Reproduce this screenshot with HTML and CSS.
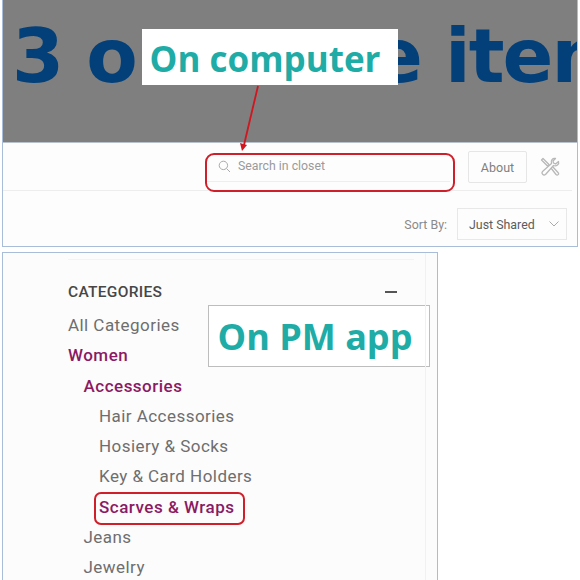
FILE: index.html
```html
<!DOCTYPE html>
<html lang="en">

<head>
    <meta charset="UTF-8">
    <title>Search in closet</title>
    <link rel="stylesheet" href="styles.css">
</head>

<body>

    <div class="shot shot-computer">
        <div class="banner">
            <div class="banner-text">3 on more items</div>
            <div class="callout callout-computer">On computer</div>
            <svg class="arrow" width="30" height="70" viewBox="0 0 30 70">
                <path d="M22 1 L8 60" stroke="#d0161f" stroke-width="1.8" fill="none"/>
                <path d="M4 58 L11 60 L6 66 Z" fill="#d0161f"/>
            </svg>
        </div>

        <div class="toolbar">
            <div class="search-ring">
                <div class="search-field">
                    <svg class="search-icon" width="13" height="13" viewBox="0 0 13 13">
                        <circle cx="5.4" cy="5.4" r="4.2" stroke="#aaa" stroke-width="1" fill="none"/>
                        <path d="M8.5 8.5 L12 12" stroke="#aaa" stroke-width="1" fill="none"/>
                    </svg>
                    <span>Search in closet</span>
                </div>
            </div>
            <button class="about-btn">About</button>
            <svg class="tools-icon" width="20" height="20" viewBox="0 0 20 20">
                <path d="M18.500 4.500 L15.500 7 L13.500 6 L13 4 L15.500 1.500 C12.500 0.800 10.500 3.500 11.500 6.500 L2.500 14.500 C0.800 16.500 3.500 19 5.500 17.500 L13.500 8.500 C16.500 9.500 19.500 7.500 18.500 4.500 Z" stroke="#b8b8b8" stroke-width="1.300" fill="none" stroke-linejoin="round"/>
                <path d="M1.500 3 L3 1.500 L9 7.500 L7.500 9 Z M11 11 L16 17.500 C17.500 19 19.500 17 18 15.500 L12.500 9.500" stroke="#b8b8b8" stroke-width="1.300" fill="none" stroke-linejoin="round"/>
            </svg>
        </div>

        <div class="sort-row">
            <span class="sort-label">Sort By:</span>
            <div class="sort-select">
                <span>Just Shared</span>
                <svg width="10" height="6" viewBox="0 0 10 6">
                    <path d="M0.500 0.500 L5 5 L9.500 0.500" stroke="#aaa" stroke-width="1" fill="none"/>
                </svg>
            </div>
        </div>
    </div>

    <div class="shot shot-app">
        <div class="categories">
            <div class="cat-head">
                <span>CATEGORIES</span>
                <span class="cat-minus"></span>
            </div>
            <div class="cat-item">All Categories</div>
            <div class="cat-item active">Women</div>
            <div class="cat-item level-1 active">Accessories</div>
            <div class="cat-item level-2">Hair Accessories</div>
            <div class="cat-item level-2">Hosiery &amp; Socks</div>
            <div class="cat-item level-2">Key &amp; Card Holders</div>
            <div class="cat-item level-2 active"><span class="cat-ring">Scarves &amp; Wraps</span></div>
            <div class="cat-item level-1">Jeans</div>
            <div class="cat-item level-1">Jewelry</div>
        </div>
        <div class="callout callout-app">On PM app</div>
    </div>

</body>

</html>
```

FILE: styles.css
```css
html, body {
    height: 100%;
    overflow: hidden;
}

body {
    margin: 0;
    background-color: #fff;
    font-family: 'Roboto', sans-serif;
    padding: 0 2px 0 2px;
    box-sizing: border-box;
}

.shot {
    position: relative;
    background-color: #fdfdfd;
    border: 1px solid #a9bcd8;
    box-sizing: border-box;
    overflow: hidden;
}

.shot-computer {
    width: 576px;
    height: 247px;
    border-top: none;
}

.shot-app {
    width: 436px;
    height: 340px;
    margin-top: 5px;
    background-color: #fcfcfc;
}

.shot-app::after {
    content: "";
    position: absolute;
    top: 0;
    bottom: 0;
    right: 11px;
    width: 1px;
    background-color: #f1f1f1;
}

/* grey banner */
.banner {
    position: relative;
    height: 143px;
    background-color: #7f7f7f;
    box-sizing: border-box;
    padding: 11px 0 0 9px;
    border-bottom: 1px solid #b9c2cc;
}

.banner-text {
    font-family: 'DejaVu Sans', sans-serif;
    font-weight: 700;
    font-size: 75px;
    letter-spacing: -2px;
    line-height: 90px;
    color: #03407a;
    white-space: nowrap;
    filter: blur(0.7px);
}

.callout {
    position: absolute;
    background-color: #fff;
    color: #20aca6;
    font-family: 'Open Sans', sans-serif;
    font-weight: 700;
    box-sizing: border-box;
    display: flex;
    align-items: center;
    justify-content: center;
}

.callout-computer {
    left: 139px;
    top: 29px;
    width: 256px;
    height: 56px;
    padding: 3px 10px 0 0;
    font-size: 35px;
}

.callout-app {
    left: 205px;
    top: 52px;
    width: 222px;
    height: 62px;
    padding-right: 8px;
    font-size: 36px;
    border: 1px solid #bdbdbd;
}

.arrow {
    position: absolute;
    left: 233px;
    top: 85px;
}

/* toolbar */
.toolbar {
    display: flex;
    align-items: flex-start;
    height: 48px;
    margin-right: 5px;
    padding-left: 202px;
    box-sizing: border-box;
    border-bottom: 1px solid #ededed;
}

.search-ring {
    width: 250px;
    height: 39px;
    margin-top: 10px;
    border: 2px solid #cf1f2a;
    border-radius: 9px;
    box-sizing: border-box;
    padding: 0 3px 0 0;
}

.search-field {
    display: flex;
    align-items: center;
    gap: 7px;
    height: 27px;
    padding: 0 0 4px 11px;
    box-sizing: border-box;
    border-bottom: 1px solid #eee;
    font-size: 12.3px;
    color: #9a9a9a;
}

.about-btn {
    width: 59px;
    height: 32px;
    margin: 8px 0 0 13px;
    padding: 0;
    background-color: #fdfdfd;
    border: 1px solid #e6e6e6;
    border-radius: 2px;
    font-family: 'Roboto', sans-serif;
    font-size: 12.5px;
    color: #808080;
}

.tools-icon {
    margin: 14px 0 0 13px;
}

/* sort row */
.sort-row {
    display: flex;
    align-items: center;
    justify-content: flex-end;
    gap: 10px;
    margin-top: 17px;
    margin-right: 10px;
}

.sort-label {
    font-size: 12.4px;
    color: #8a8a8a;
}

.sort-select {
    display: flex;
    align-items: center;
    justify-content: space-between;
    width: 110px;
    height: 32px;
    padding: 0 7px 0 11px;
    box-sizing: border-box;
    background-color: #fdfdfd;
    border: 1px solid #e8e8e8;
    font-size: 12.4px;
    color: #5c5c5c;
}

/* category list */
.categories {
    width: 346px;
    margin: 6px 0 0 65px;
    padding-top: 13px;
    border-top: 1px solid #f6f3ef;
}

.cat-head {
    display: flex;
    align-items: center;
    justify-content: space-between;
    height: 37px;
    padding-right: 17px;
    box-sizing: border-box;
    font-size: 15.5px;
    font-weight: 500;
    letter-spacing: 0.3px;
    color: #474747;
}

.cat-minus {
    width: 12px;
    height: 2px;
    background-color: #555;
}

.cat-item {
    height: 30.300px;
    line-height: 30.300px;
    font-size: 17px;
    letter-spacing: 0.45px;
    color: #6e6e6e;
    white-space: nowrap;
}

.cat-item.active {
    color: #8b1a63;
    font-weight: 500;
    letter-spacing: 0.5px;
}

.level-1 {
    padding-left: 15.500px;
}

.level-2 {
    padding-left: 31px;
}

.cat-ring {
    display: inline-block;
    height: 33px;
    line-height: 27px;
    margin-left: -5px;
    padding: 0 8px 0 3px;
    border: 2px solid #cf1f2a;
    border-radius: 7px;
    box-sizing: border-box;
}
```
